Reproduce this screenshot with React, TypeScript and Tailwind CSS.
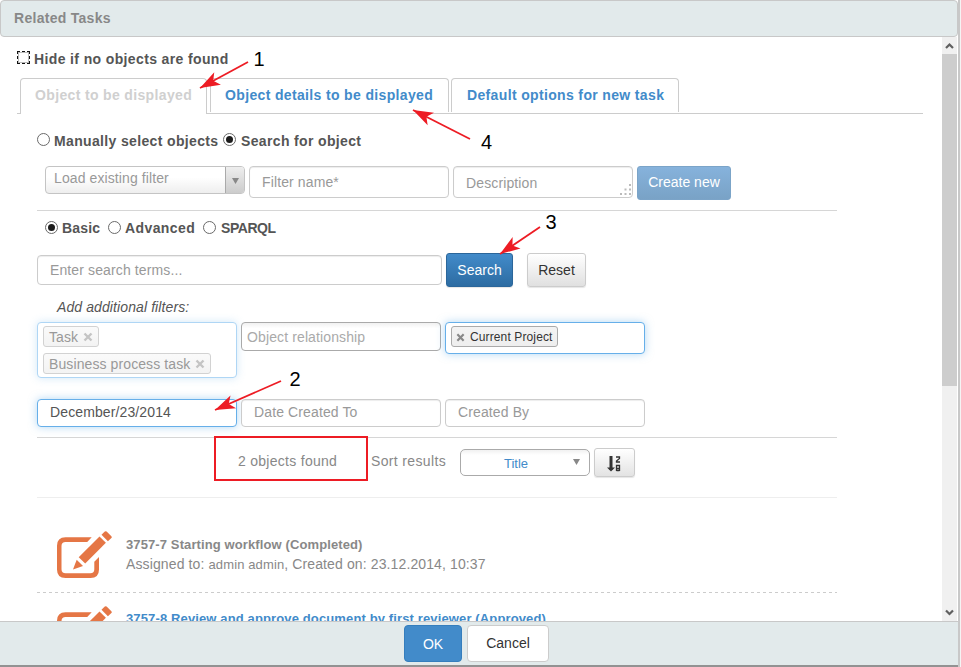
import React from "react";

const inputBase =
  "flex shrink-0 items-center rounded-[4px] border border-[#ccc] bg-white tracking-[0.12px] text-[#999] shadow-[inset_0_1px_1px_rgba(0,0,0,0.075)]";

function Radio({ checked = false }: { checked?: boolean }) {
  return (
    <span className="flex h-[13px] w-[13px] shrink-0 items-center justify-center rounded-full border border-[#6a6a6a] bg-white">
      {checked && <span className="h-[7px] w-[7px] rounded-full bg-[#1c1c1c]" />}
    </span>
  );
}

function Rule({ className }: { className: string }) {
  return <div className={"h-px w-[800px] shrink-0 " + className} />;
}

function EditIcon() {
  return (
    <svg className="h-[48px] w-[56px] shrink-0" viewBox="0 0 56 48" fill="#e57645">
      <path d="M35.700 6.300H9.500Q1 6.300 1 14.800V38.500Q1 47 9.500 47H34.500Q43 47 43 38.500V26L38.300 30.700V38.300Q38.300 42.300 34.300 42.300H9.700Q5.500 42.300 5.500 38.300V15Q5.500 11 9.700 11H31.200Z" />
      <path d="M17 38.500L20.700 28.700L27 34.900Z" />
      <path d="M22.700 26.200L43.500 5.500L49.900 11.800L29.200 32.500Z" />
      <path d="M45.500 3.700L48.800 0.500Q49.700 -0.200 50.600 0.600L55.400 5.300Q56.100 6.200 55.400 7L51.900 10.200Z" />
    </svg>
  );
}

function Cross({ className }: { className: string }) {
  return (
    <svg className={className} viewBox="0 0 10 10">
      <path d="M1.500 1.500 L8.500 8.500 M8.500 1.500 L1.500 8.500" stroke="currentColor" strokeWidth="2.4" />
    </svg>
  );
}

function Chip({ label, className }: { label: string; className: string }) {
  return (
    <div
      className={
        "flex h-[21px] items-center justify-between rounded-[3px] border border-[#d2d2d2] bg-gradient-to-b from-[#fafafa] to-[#f3f3f3] pr-[5px] pl-[5px] tracking-[0.1px] text-[#999] " +
        className
      }
    >
      <span>{label}</span>
      <Cross className="h-[10px] w-[10px] text-[#c4c4c4]" />
    </div>
  );
}

function Arrow({ from, to }: { from: [number, number]; to: [number, number] }) {
  const angle = (Math.atan2(to[1] - from[1], to[0] - from[0]) * 180) / Math.PI;
  return (
    <g>
      <line x1={from[0]} y1={from[1]} x2={to[0]} y2={to[1]} stroke="#ed1c24" strokeWidth="1.8" />
      <path
        d="M0 0 L-20 -7 L-15 0 L-20 7 Z"
        fill="#ed1c24"
        transform={`translate(${to[0]} ${to[1]}) rotate(${angle})`}
      />
    </g>
  );
}

function Annotations() {
  return (
    <svg
      className="pointer-events-none absolute top-0 left-0 h-[667px] w-[961px] font-['Liberation_Sans',Arial,sans-serif] text-[20px]"
      viewBox="0 0 961 667"
    >
      <Arrow from={[248, 62]} to={[200, 88]} />
      <Arrow from={[281, 381]} to={[215, 410]} />
      <Arrow from={[540, 227]} to={[500, 254]} />
      <Arrow from={[470, 139]} to={[413, 110]} />
      <rect x="215" y="437" width="152" height="43" fill="none" stroke="#ed1c24" strokeWidth="2" />
      <text x="253.500" y="66">1</text>
      <text x="289.500" y="386">2</text>
      <text x="545.500" y="229">3</text>
      <text x="481" y="149">4</text>
    </svg>
  );
}

function Tab({ label, className }: { label: string; className: string }) {
  return (
    <div
      className={
        "flex items-center rounded-t-[4px] border border-b-0 border-[#ccc] pl-[14px] font-bold tracking-[0.35px] " +
        className
      }
    >
      {label}
    </div>
  );
}

export default function App() {
  return (
    <div className="relative flex h-[667px] w-[961px] overflow-hidden bg-[#f4f4f4] font-['Liberation_Sans',Arial,sans-serif] text-[14px] leading-[20px] whitespace-nowrap text-[#555]">
      <div className="flex h-[667px] w-[958px] shrink-0 flex-col border-b-2 border-[#929292] bg-white">
        <header className="flex h-[37px] shrink-0 items-center rounded-[4px] border border-[#c8c8c8] bg-[#e2eaeb] pb-px pl-[13px] font-bold tracking-[0.28px] text-[#888]">
          Related Tasks
        </header>

        <div className="flex h-[584px] shrink-0 overflow-hidden">
          <main className="flex w-[942px] shrink-0 flex-col">
            <div className="flex h-[41px] shrink-0 items-center gap-1 pt-[2px] pl-[17px] font-bold tracking-[0.37px]">
              <span className="mb-[3px] h-[13px] w-[13px] border border-dashed border-[#111] shadow-[inset_0_0_0_1px_#bbb]" />
              <span>Hide if no objects are found</span>
            </div>

            <div className="ml-[17px] flex h-[36px] w-[906px] shrink-0">
              <div className="w-[3px] border-b border-[#ccc]" />
              <Tab label="Object to be displayed" className="w-[187px] pb-[3px] text-[#d0d0d0]" />
              <div className="flex flex-1 gap-[2px] border-b border-[#ccc] pb-px pl-[3px]">
                <Tab label="Object details to be displayed" className="w-[239px] pb-px text-[#428bca]" />
                <Tab label="Default options for new task" className="w-[228px] pb-px pl-[15px] text-[#428bca]" />
              </div>
            </div>

            <div className="flex h-[52px] shrink-0 items-center pb-px pl-[37px] font-bold tracking-[0.35px]">
              <Radio />
              <span className="mt-[2px] ml-1 w-[169px]">Manually select objects</span>
              <Radio checked />
              <span className="mt-[2px] ml-[5px]">Search for object</span>
            </div>

            <div className="flex h-[44px] shrink-0 items-start gap-1 pl-[45px]">
              <div className="flex h-[28px] w-[200px] overflow-hidden rounded-[4px] border border-[#c4c4c4] bg-gradient-to-b from-white from-40% to-[#eee] tracking-[0.1px] text-[#999]">
                <span className="flex-1 pt-[1px] pl-[8px]">Load existing filter</span>
                <span className="flex w-[19px] items-center justify-center border-l border-[#aaa] bg-gradient-to-b from-[#eee] to-[#ccc]">
                  <svg className="mt-[2px] h-[6px] w-[7px]" viewBox="0 0 7 6">
                    <path d="M0 0H7L3.500 6Z" fill="#888" />
                  </svg>
                </span>
              </div>
              <div className={inputBase + " h-[32px] w-[200px] pl-[12px]"}>Filter name*</div>
              <div className={inputBase + " h-[32px] w-[180px] justify-between pl-[12px]"}>
                <span className="pt-[2px]">Description</span>
                <svg className="mb-[1px] h-[12px] w-[12px] self-end" viewBox="0 0 12 12" fill="#bbb">
                  <path d="M9 0h2v2h-2zM4.500 4.500h2v2h-2zM9 4.500h2v2h-2zM0 9h2v2h-2zM4.500 9h2v2h-2zM9 9h2v2h-2z" />
                </svg>
              </div>
              <div className="flex h-[34px] w-[94px] items-center justify-center rounded-[3px] border border-[#7ba4c8] bg-gradient-to-b from-[#86b2dc] to-[#79a2c6] pb-[2px] text-white">
                Create new
              </div>
            </div>

            <div className="flex flex-col pl-[37px]">
              <Rule className="bg-[#d6d6d6]" />

              <div className="flex h-[42px] shrink-0 items-center pb-[10px] pl-[8px] font-bold tracking-[0.4px]">
                <Radio checked />
                <span className="mt-[2px] ml-1 w-[46px] tracking-[0.2px]">Basic</span>
                <Radio />
                <span className="mt-[2px] ml-1 w-[78px]">Advanced</span>
                <Radio />
                <span className="mt-[2px] ml-[5px] tracking-[-0.45px]">SPARQL</span>
              </div>

              <div className="flex h-[34px] shrink-0 items-center">
                <div className={inputBase + " h-[30px] w-[405px] pl-[12px]"}>Enter search terms...</div>
                <div className="ml-1 flex h-[34px] w-[67px] items-center justify-center rounded-[3px] border border-[#2b669a] bg-gradient-to-b from-[#428bca] to-[#2d6ca2] text-white shadow-[0_1px_1px_rgba(0,0,0,0.1)]">
                  Search
                </div>
                <div className="ml-[14px] flex h-[34px] w-[59px] items-center justify-center rounded-[3px] border border-[#ccc] bg-gradient-to-b from-white to-[#e0e0e0] text-[#333] shadow-[0_1px_1px_rgba(0,0,0,0.1)]">
                  Reset
                </div>
              </div>

              <div className="flex h-[35px] shrink-0 items-center pt-[5px] pl-[20px] tracking-[0.1px] italic">
                Add additional filters:
              </div>

              <div className="flex h-[77px] shrink-0 items-start gap-1">
                <div className="flex h-[56px] w-[200px] flex-col gap-[6px] rounded-[4px] border border-[#afd6f5] bg-white pt-[3px] pl-[5px] shadow-[0_0_8px_rgba(102,175,233,0.3)]">
                  <Chip label="Task" className="w-[56px]" />
                  <Chip label="Business process task" className="w-[168px]" />
                </div>
                <div className="flex h-[29px] w-[200px] items-center rounded-[4px] border border-[#aaa] bg-gradient-to-b from-[#f1f1f1] to-white to-20% pl-[5px] tracking-[0.12px] text-[#aaa]">
                  Object relationship
                </div>
                <div className="flex h-[32px] w-[200px] items-start rounded-[4px] border border-[#66afe9] bg-white pt-[3px] pl-[5px] shadow-[0_0_8px_rgba(102,175,233,0.5)]">
                  <div className="flex h-[21px] w-[107px] items-center gap-[5px] rounded-[3px] border border-[#aaa] bg-gradient-to-b from-[#f3f3f3] to-[#eee] pl-[4px] text-[12px] tracking-[0.12px] text-[#333]">
                    <Cross className="mt-[2px] h-[9px] w-[9px] text-[#888]" />
                    <span>Current Project</span>
                  </div>
                </div>
              </div>

              <div className="flex h-[38px] shrink-0 items-start gap-1">
                <div className="flex h-[28px] w-[200px] items-center rounded-[4px] border border-[#66afe9] bg-white pb-[2px] pl-[12px] tracking-[0.12px] shadow-[0_0_8px_rgba(102,175,233,0.5)]">
                  December/23/2014
                </div>
                <div className={inputBase + " h-[28px] w-[200px] pb-[2px] pl-[12px]"}>Date Created To</div>
                <div className={inputBase + " h-[28px] w-[200px] pb-[2px] pl-[12px]"}>Created By</div>
              </div>

              <Rule className="bg-[#d6d6d6]" />

              <div className="flex h-[59px] shrink-0 items-start pt-[10px] text-[#888]">
                <span className="mt-[3px] ml-[201px] w-[133px] tracking-[0.28px]">2 objects found</span>
                <span className="mt-[3px] w-[89px] tracking-[0.35px]">Sort results</span>
                <div className="mt-[1px] flex h-[27px] w-[130px] items-center rounded-[5px] border border-[#aaa] bg-gradient-to-b from-[#f1f1f1] to-white to-20% pl-[43px] text-[13px] text-[#428bca]">
                  <span className="w-[69px] pt-[2px]">Title</span>
                  <svg className="mb-px h-[6px] w-[7px]" viewBox="0 0 7 6">
                    <path d="M0 0H7L3.500 6Z" fill="#888" />
                  </svg>
                </div>
                <div className="ml-1 flex h-[29px] w-[41px] items-center justify-center rounded-[3px] border border-[#ccc] bg-gradient-to-b from-white to-[#e3e3e3] shadow-[0_1px_1px_rgba(0,0,0,0.1)]">
                  <svg className="mt-[2px] mr-[2px] h-[16px] w-[14px]" viewBox="0 0 14 16" fill="none" stroke="#333">
                    <path d="M4 0V14" strokeWidth="3" />
                    <path d="M0 11.500H8L4 15.500Z" fill="#333" stroke="none" />
                    <path d="M9 1H12.500V2.500L9.500 5V6H13M9.500 15V9.500H12.500V15M9.500 12.500H12.500M9.500 14.500H12.500" strokeWidth="1.300" />
                  </svg>
                </div>
              </div>

              <Rule className="bg-[#eee]" />

              <div className="flex h-[94px] shrink-0 items-start pt-[33px] pl-[19px] text-[#888]">
                <EditIcon />
                <div className="ml-[14px] pt-[4px]">
                  <div className="text-[13px] leading-[20px] font-bold tracking-[0.11px]">
                    3757-7 Starting workflow (Completed)
                  </div>
                  <div className="-mt-px tracking-[0.12px]">
                    Assigned to: <span className="text-[13px]">admin admin</span>, Created on: 23.12.2014, 10:37
                  </div>
                </div>
              </div>

              <div className="h-px w-[800px] shrink-0 bg-[repeating-linear-gradient(90deg,#ccc_0_3px,transparent_3px_6px)]" />

              <div className="flex h-[75px] shrink-0 items-start pt-[13px] pl-[19px]">
                <EditIcon />
                <div className="ml-[14px] pt-[3px] text-[13px] leading-[20px] font-bold tracking-[0.13px] text-[#428bca]">
                  3757-8 Review and approve document by first reviewer (Approved)
                </div>
              </div>
            </div>
          </main>

          <aside className="flex w-[15px] shrink-0 flex-col items-center bg-[#f0f0f0]">
            <svg className="h-[17px] w-[15px] shrink-0" viewBox="0 0 15 17" fill="none">
              <path d="M4 11L7.500 7.500L11 11" stroke="#606060" strokeWidth="2.2" />
            </svg>
            <div className="h-[332px] w-full shrink-0 bg-[#cdcdcd]" />
            <svg className="mt-auto h-[17px] w-[15px] shrink-0" viewBox="0 0 15 17" fill="none">
              <path d="M4 6.500L7.500 10L11 6.500" stroke="#606060" strokeWidth="2.2" />
            </svg>
          </aside>
        </div>

        <footer className="flex h-[44px] shrink-0 items-center justify-center gap-[5px] border-t border-[#c8c8c8] bg-[#e2eaeb] pr-[5px]">
          <div className="flex h-[37px] w-[58px] items-center justify-center rounded-[4px] border border-[#357ebd] bg-[#428bca] text-white">
            OK
          </div>
          <div className="flex h-[37px] w-[82px] items-center justify-center rounded-[4px] border border-[#ccc] bg-white pb-px text-[#333]">
            Cancel
          </div>
        </footer>
      </div>
      <div className="w-[2px] bg-[#c8c8c8]" />
      <Annotations />
    </div>
  );
}
